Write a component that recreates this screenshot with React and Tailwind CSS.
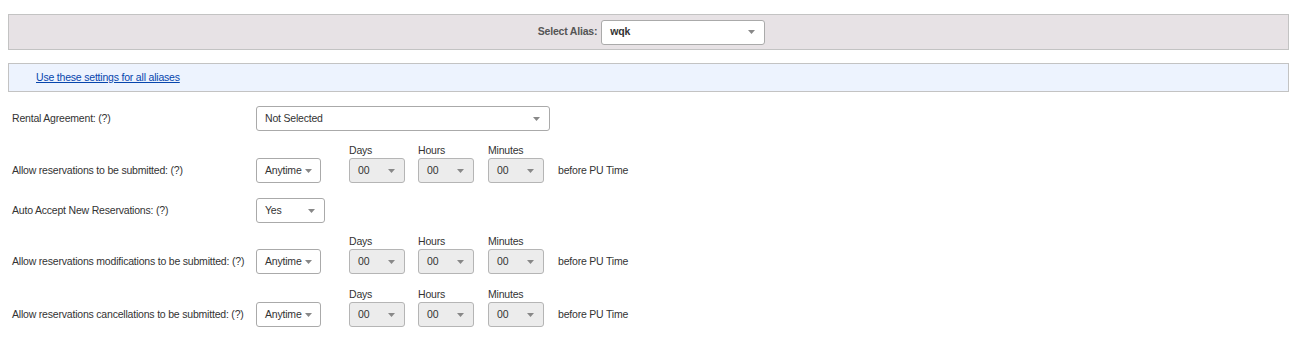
import React from "react";

function Arrow() {
  return (
    <svg width="7" height="4" viewBox="0 0 7 4" className="shrink-0">
      <path d="M0 0 L7 0 L3.5 4 Z" fill="#888888" />
    </svg>
  );
}

function Sel({ value, w, disabled, bold, pr = "pr-[9px]" }) {
  return (
    <div
      className={`flex h-[25px] shrink-0 items-center justify-between rounded-[3px] border pl-[8px] ${pr} ${w} ${
        disabled ? "border-[#b5b5b5] bg-[#ececec]" : "border-[#aaaaaa] bg-white"
      }`}
    >
      <span className={`whitespace-nowrap text-[10.5px] tracking-[-0.2px] text-[#333] ${bold ? "font-bold" : ""}`}>
        {value}
      </span>
      <Arrow />
    </div>
  );
}

function Label({ children }) {
  return (
    <div className="flex h-[25px] w-[248px] shrink-0 items-center whitespace-nowrap pl-[4px] text-[10.5px] tracking-[-0.2px] text-[#333]">
      {children}
    </div>
  );
}

function TimeCol({ title, ml }) {
  return (
    <div className={`flex flex-col ${ml}`}>
      <div className="mb-[1px] h-[14px] text-[10.5px] leading-[14px] tracking-[-0.2px] text-[#333]">{title}</div>
      <Sel value="00" w="w-[56px]" disabled />
    </div>
  );
}

function TimeRow({ label, mt }) {
  return (
    <div className={`flex items-end ${mt}`}>
      <Label>{label}</Label>
      <Sel value="Anytime" w="w-[65px]" pr="pr-[8px]" />
      <TimeCol title="Days" ml="ml-[28px]" />
      <TimeCol title="Hours" ml="ml-[13px]" />
      <TimeCol title="Minutes" ml="ml-[14px]" />
      <div className="ml-[14px] flex h-[25px] items-center whitespace-nowrap text-[10.5px] tracking-[-0.2px] text-[#333]">
        before PU Time
      </div>
    </div>
  );
}

export default function App() {
  return (
    <div
      className="min-h-[353px] bg-white px-[8px] pt-[14px]"
      style={{ fontFamily: '"Liberation Sans", Arial, sans-serif' }}
    >
      <div className="flex h-[36px] w-[1281px] items-center justify-center border border-[#c3c3c3] bg-[#e7e2e5] pl-[6px]">
        <span className="mr-[4px] text-[10.5px] font-bold tracking-[-0.2px] text-[#555]">Select Alias:</span>
        <Sel value="wqk" w="w-[164px]" bold />
      </div>
      <div className="mt-[13px] flex h-[29px] w-[1281px] items-center border border-[#c3c3c3] bg-[#edf3fe] pl-[27px]">
        <a href="#" className="text-[10.5px] tracking-[-0.2px] text-[#0645ad] underline">
          Use these settings for all aliases
        </a>
      </div>

      <div className="mt-[14px] flex items-end">
        <Label>Rental Agreement: (?)</Label>
        <Sel value="Not Selected" w="w-[294px]" />
      </div>

      <TimeRow label="Allow reservations to be submitted: (?)" mt="mt-[12px]" />

      <div className="mt-[15px] flex items-end">
        <Label>Auto Accept New Reservations: (?)</Label>
        <Sel value="Yes" w="w-[69px]" />
      </div>

      <TimeRow label="Allow reservations modifications to be submitted: (?)" mt="mt-[11px]" />
      <TimeRow label="Allow reservations cancellations to be submitted: (?)" mt="mt-[13px]" />
    </div>
  );
}
